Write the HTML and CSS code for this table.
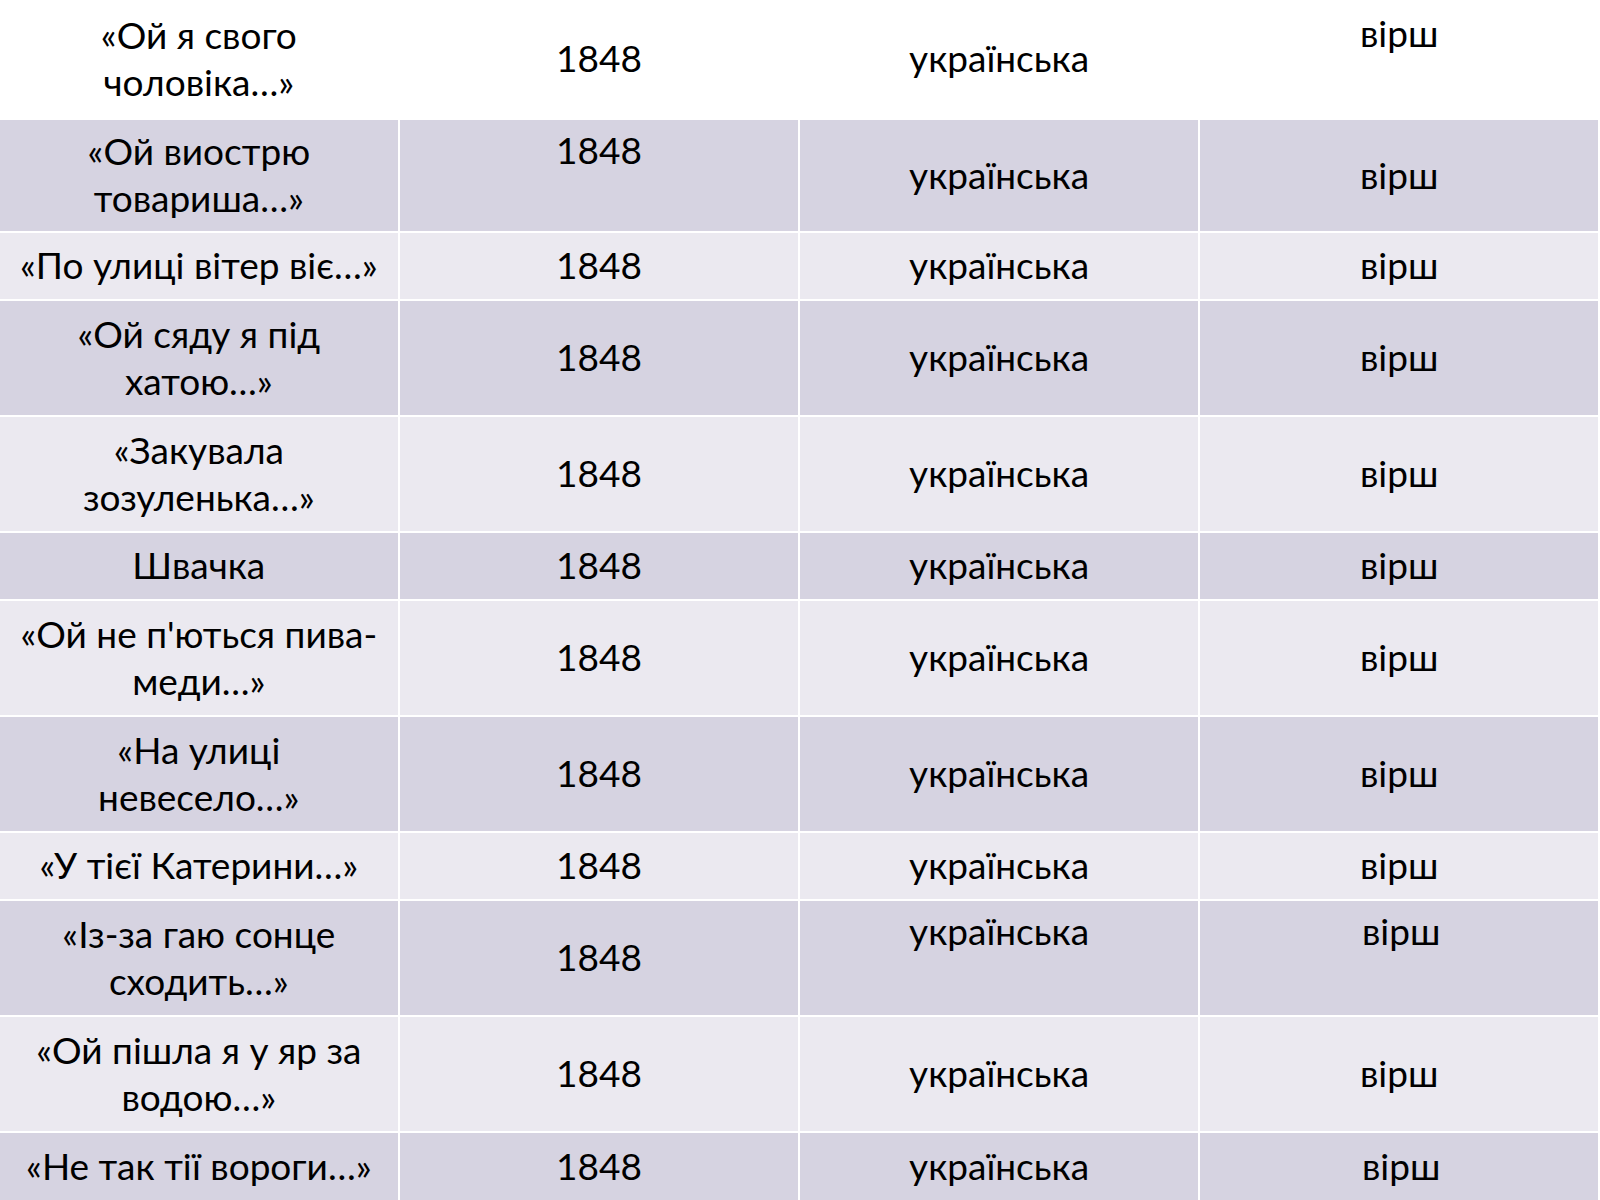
FILE: index.html
```html
<!DOCTYPE html>
<html lang="uk">
<head>
<meta charset="utf-8">
<title>Твори 1848</title>
<link rel="stylesheet" href="styles.css">
</head>
<body>
<div class="table">
  <div class="cell plain">«Ой я свого<br>чоловіка…»</div>
  <div class="cell plain">1848</div>
  <div class="cell plain">українська</div>
  <div class="cell plain top first">вірш</div>

  <div class="cell dark">«Ой виострю<br>товариша…»</div>
  <div class="cell dark top">1848</div>
  <div class="cell dark">українська</div>
  <div class="cell dark">вірш</div>

  <div class="cell light">«По улиці вітер віє…»</div>
  <div class="cell light">1848</div>
  <div class="cell light">українська</div>
  <div class="cell light">вірш</div>

  <div class="cell dark">«Ой сяду я під<br>хатою…»</div>
  <div class="cell dark">1848</div>
  <div class="cell dark">українська</div>
  <div class="cell dark">вірш</div>

  <div class="cell light">«Закувала<br>зозуленька…»</div>
  <div class="cell light">1848</div>
  <div class="cell light">українська</div>
  <div class="cell light">вірш</div>

  <div class="cell dark">Швачка</div>
  <div class="cell dark">1848</div>
  <div class="cell dark">українська</div>
  <div class="cell dark">вірш</div>

  <div class="cell light">«Ой не п'ються пива-<br>меди…»</div>
  <div class="cell light">1848</div>
  <div class="cell light">українська</div>
  <div class="cell light">вірш</div>

  <div class="cell dark">«На улиці<br>невесело…»</div>
  <div class="cell dark">1848</div>
  <div class="cell dark">українська</div>
  <div class="cell dark">вірш</div>

  <div class="cell light">«У тієї Катерини…»</div>
  <div class="cell light">1848</div>
  <div class="cell light">українська</div>
  <div class="cell light">вірш</div>

  <div class="cell dark">«Із-за гаю сонце<br>сходить…»</div>
  <div class="cell dark">1848</div>
  <div class="cell dark top">українська</div>
  <div class="cell dark top shift">вірш</div>

  <div class="cell light">«Ой пішла я у яр за<br>водою…»</div>
  <div class="cell light">1848</div>
  <div class="cell light">українська</div>
  <div class="cell light">вірш</div>

  <div class="cell dark">«Не так тії вороги…»</div>
  <div class="cell dark">1848</div>
  <div class="cell dark">українська</div>
  <div class="cell dark shift">вірш</div>
</div>
</body>
</html>
```

FILE: styles.css
```css
html, body {
  margin: 0;
  padding: 0;
  background: #ffffff;
}

body {
  width: 1600px;
  height: 1200px;
  overflow: hidden;
  font-family: "Lato", "Open Sans", "DejaVu Sans", sans-serif;
  color: #000000;
}

.table {
  width: 1598px;
  display: grid;
  grid-template-columns: repeat(4, 1fr);
  grid-template-rows: 118px 111px 66px 114px 114px 66px 114px 114px 66px 114px 114px 67px;
  column-gap: 2.5px;
  row-gap: 2px;
  background: #ffffff;
}

.cell {
  display: flex;
  flex-direction: column;
  justify-content: center;
  align-items: center;
  text-align: center;
  font-size: 37px;
  line-height: 47px;
  padding: 0 4px 3px;
  box-sizing: border-box;
}

.cell.top {
  justify-content: flex-start;
  padding-top: 6px;
}

.cell.top.first {
  padding-top: 9px;
}

.cell.shift {
  padding-left: 8px;
}

.plain {
  background: #ffffff;
}

.dark {
  background: #d6d3e1;
}

.light {
  background: #ebe9f0;
}
```
